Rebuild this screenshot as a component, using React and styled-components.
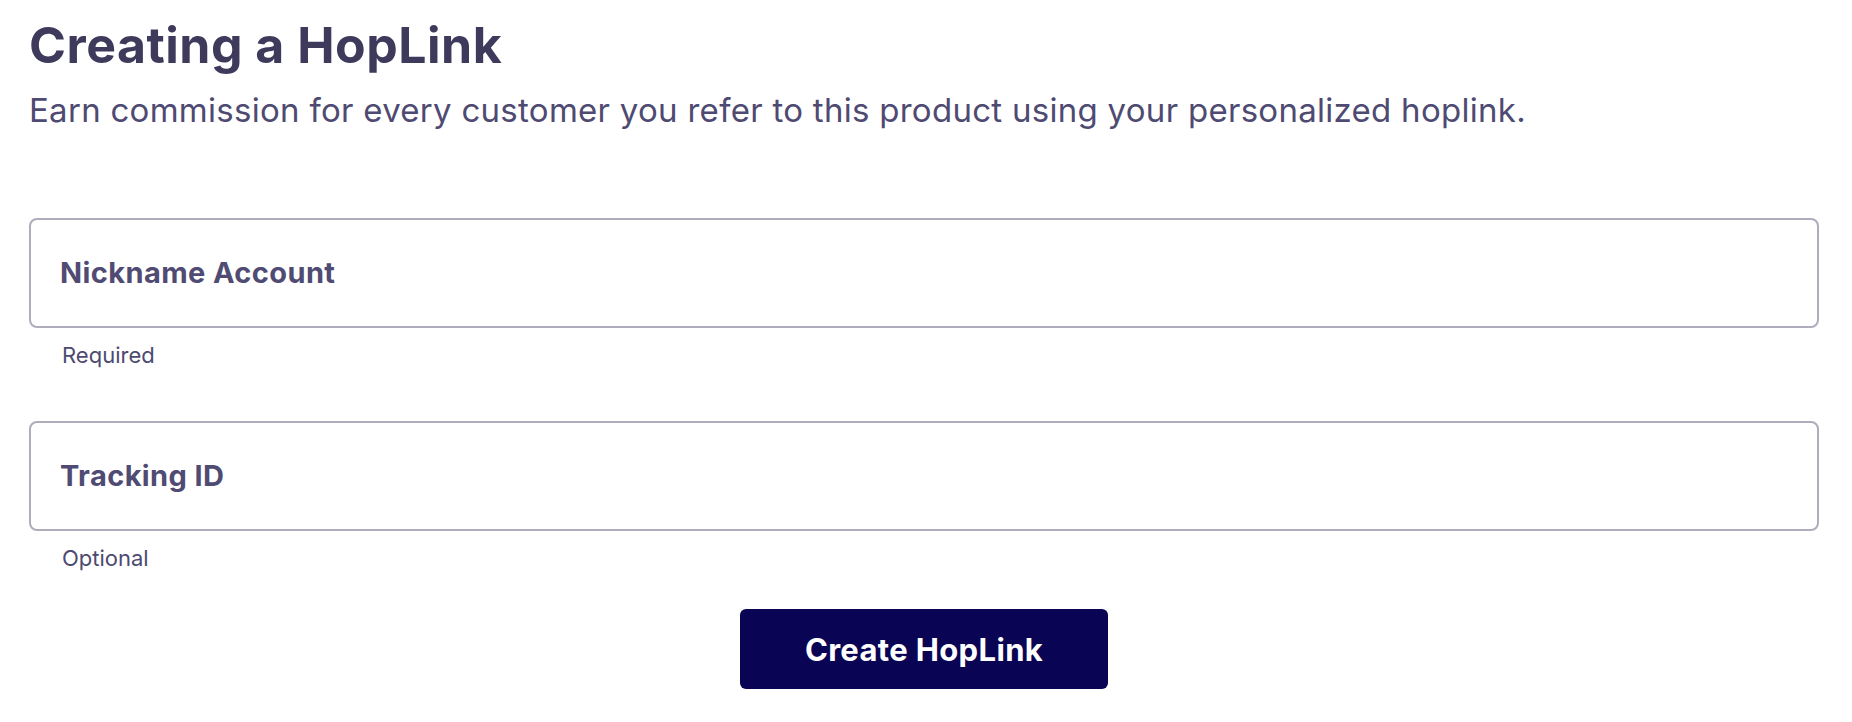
import React from "react";
import styled, { createGlobalStyle } from "styled-components";

const Global = createGlobalStyle`
  html, body { margin: 0; padding: 0; background: #ffffff; }
  body {
    font-family: "Inter", "Open Sans", "Liberation Sans", sans-serif;
    -webkit-font-smoothing: antialiased;
  }
  * { box-sizing: border-box; }
`;

const Page = styled.main`
  display: flex;
  flex-direction: column;
  padding: 15px 33px 0 29px;
`;

const Title = styled.h1`
  margin: 0;
  font-size: 50px;
  line-height: 60px;
  font-weight: 700;
  letter-spacing: 0.5px;
  color: #3e3a5c;
`;

const Subtitle = styled.p`
  margin: 15px 0 0;
  font-size: 33px;
  line-height: 40px;
  font-weight: 400;
  letter-spacing: 0.28px;
  color: #4e4a72;
`;

const Form = styled.form`
  display: flex;
  flex-direction: column;
  margin-top: 88px;
`;

const Field = styled.div`
  display: flex;
  flex-direction: column;
  margin-top: ${(p) => p.$gap || 0}px;
`;

const FieldBox = styled.label`
  display: flex;
  align-items: center;
  height: 110px;
  padding: 0 29px;
  border: 2px solid #aeacbd;
  border-radius: 8px;
  background: #fff;
  cursor: text;
`;

const FieldLabel = styled.span`
  font-size: 29px;
  line-height: 36px;
  font-weight: 700;
  letter-spacing: 0.4px;
  color: #4f4b73;
`;

const Helper = styled.span`
  margin-top: 13px;
  padding-left: 33px;
  font-size: 22px;
  line-height: 28px;
  font-weight: 400;
  color: #4d4a70;
`;

const Actions = styled.div`
  display: flex;
  justify-content: center;
  margin-top: 37px;
`;

const Button = styled.button`
  width: 368px;
  height: 80px;
  border: none;
  border-radius: 6px;
  background: #0a0455;
  color: #ffffff;
  font-family: inherit;
  font-size: 31px;
  font-weight: 700;
  letter-spacing: 0.35px;
  cursor: pointer;
`;

export default function App() {
  return (
    <>
      <Global />
      <Page>
        <Title>Creating a HopLink</Title>
        <Subtitle>
          Earn commission for every customer you refer to this product using your personalized hoplink.
        </Subtitle>
        <Form onSubmit={(e) => e.preventDefault()}>
          <Field>
            <FieldBox>
              <FieldLabel>Nickname Account</FieldLabel>
            </FieldBox>
            <Helper>Required</Helper>
          </Field>
          <Field $gap={52}>
            <FieldBox>
              <FieldLabel>Tracking ID</FieldLabel>
            </FieldBox>
            <Helper>Optional</Helper>
          </Field>
          <Actions>
            <Button type="submit">Create HopLink</Button>
          </Actions>
        </Form>
      </Page>
    </>
  );
}
